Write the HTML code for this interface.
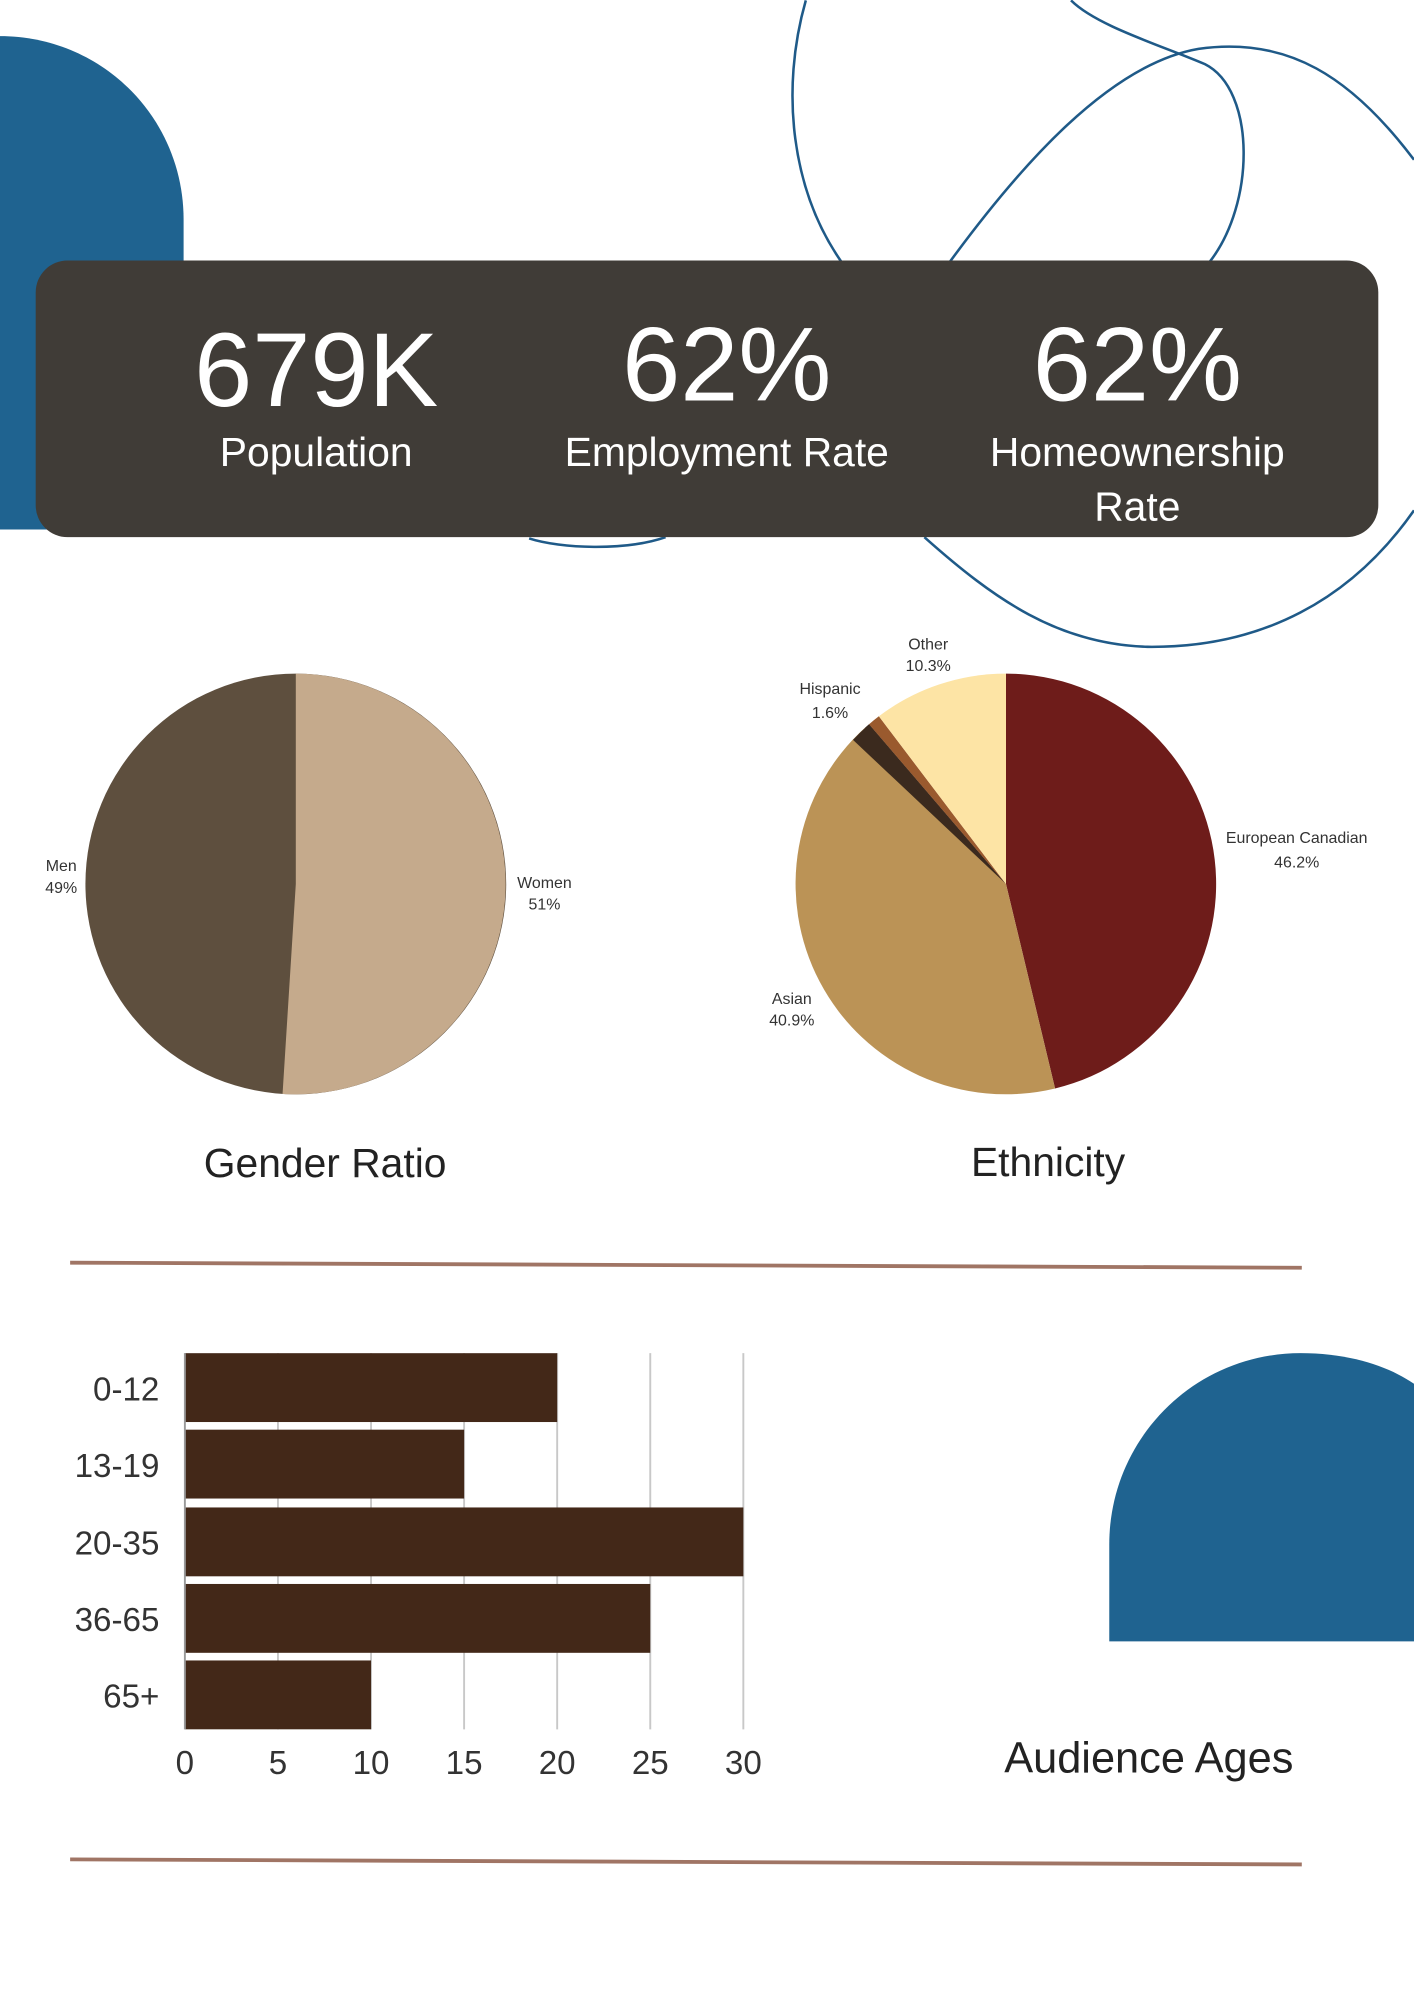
<!DOCTYPE html>
<html><head><meta charset="utf-8"><style>
html,body{margin:0;padding:0;background:#fff;}
svg{display:block;}
text{font-family:"Liberation Sans",sans-serif;}
</style></head><body>
<svg width="1414" height="2000" viewBox="0 0 1109 1568" xmlns="http://www.w3.org/2000/svg">
<rect width="1109" height="1568" fill="#fff"/>
<path d="M0 28 C80 28 144 92 144 172 L144 415 L0 415 Z" fill="#1f6390"/>
<g fill="none" stroke="#1f5a88" stroke-width="2">
<path d="M632 0 C612 70 620 150 662 208"/>
<path d="M745 205 C800 130 870 50 940 38 C1010 28 1060 60 1109 125"/>
<path d="M840 0 C860 20 910 35 945 50 C985 70 985 160 948 206"/>
<path d="M415 422 C440 430 490 432 522 421"/>
<path d="M725 421 C780 470 830 505 900 507 C990 508 1060 470 1109 400"/>
</g>
<rect x="28" y="204" width="1053" height="217" rx="25" fill="#403c37"/>
<g fill="#fff" text-anchor="middle">
<text x="248" y="318" font-size="82">679K</text>
<text x="248" y="365" font-size="32">Population</text>
<text x="570" y="314" font-size="82">62%</text>
<text x="570" y="365" font-size="32">Employment Rate</text>
<text x="892" y="314" font-size="82">62%</text>
<text x="892" y="365" font-size="32">Homeownership</text>
<text x="892" y="408" font-size="32">Rate</text>
</g>
<circle cx="232" cy="693" r="165" fill="#5e4f3e"/>
<path d="M232 693 L232 528 A165 165 0 1 1 221.6 857.7 Z" fill="#c5aa8c"/>
<g font-size="12.5" fill="#333" text-anchor="middle">
<text x="48" y="683">Men</text><text x="48" y="700">49%</text>
<text x="427" y="696">Women</text><text x="427" y="713">51%</text>
</g>
<g transform="translate(789,693)">
<path d="M0 0 L0 -165 A165 165 0 0 1 38.5 160.4 Z" fill="#6e1c1a"/>
<path d="M0 0 L38.5 160.4 A165 165 0 0 1 -110.5 -122.6 Z" fill="#bb9356"/>
<path d="M0 0 L-110.5 -122.6 A165 165 0 0 1 -107.4 -125.3 Z" fill="#3b2a1e"/>
<path d="M0 0 L-120 -113 A165 165 0 0 1 -107.4 -125.3 Z" fill="#3b2a1e"/>
<path d="M0 0 L-107.4 -125.3 A165 165 0 0 1 -99.7 -131.5 Z" fill="#9a5a2e"/>
<path d="M0 0 L-99.7 -131.5 A165 165 0 0 1 0 -165 Z" fill="#fde4a5"/>
</g>
<g font-size="12.5" fill="#333" text-anchor="middle">
<text x="728" y="509">Other</text><text x="728" y="526">10.3%</text>
<text x="651" y="544">Hispanic</text><text x="651" y="563">1.6%</text>
<text x="1017" y="661">European Canadian</text><text x="1017" y="680">46.2%</text>
<text x="621" y="787">Asian</text><text x="621" y="804">40.9%</text>
</g>
<g fill="#222" text-anchor="middle" font-size="32">
<text x="255" y="923">Gender Ratio</text>
<text x="822" y="922">Ethnicity</text>
</g>
<g stroke="#a07565" stroke-width="3">
<line x1="55" y1="990" x2="1021" y2="994"/>
<line x1="55" y1="1458" x2="1021" y2="1462"/>
</g>
<g stroke="#c8c8c8" stroke-width="1.5">
<line x1="218" y1="1061" x2="218" y2="1356"/>
<line x1="291" y1="1061" x2="291" y2="1356"/>
<line x1="364" y1="1061" x2="364" y2="1356"/>
<line x1="437" y1="1061" x2="437" y2="1356"/>
<line x1="510" y1="1061" x2="510" y2="1356"/>
<line x1="583" y1="1061" x2="583" y2="1356"/>
</g>
<g fill="#432818">
<rect x="145" y="1061" width="292" height="54"/>
<rect x="145" y="1121" width="219" height="54"/>
<rect x="145" y="1182" width="438" height="54"/>
<rect x="145" y="1242" width="365" height="54"/>
<rect x="145" y="1302" width="146" height="54"/>
</g>
<line x1="145" y1="1061" x2="145" y2="1356" stroke="#999" stroke-width="1.5"/>
<g fill="#333" font-size="26" text-anchor="end">
<text x="125" y="1098">0-12</text>
<text x="125" y="1158">13-19</text>
<text x="125" y="1219">20-35</text>
<text x="125" y="1279">36-65</text>
<text x="125" y="1339">65+</text>
</g>
<g fill="#333" font-size="26" text-anchor="middle">
<text x="145" y="1391">0</text><text x="218" y="1391">5</text><text x="291" y="1391">10</text>
<text x="364" y="1391">15</text><text x="437" y="1391">20</text><text x="510" y="1391">25</text><text x="583" y="1391">30</text>
</g>
<path d="M870 1287 L870 1211 C870 1128 937 1061 1020 1061 C1060 1061 1090 1072 1109 1085 L1109 1287 Z" fill="#1f6390"/>
<text x="901" y="1390" font-size="34" fill="#222" text-anchor="middle">Audience Ages</text>
</svg>
</body></html>
